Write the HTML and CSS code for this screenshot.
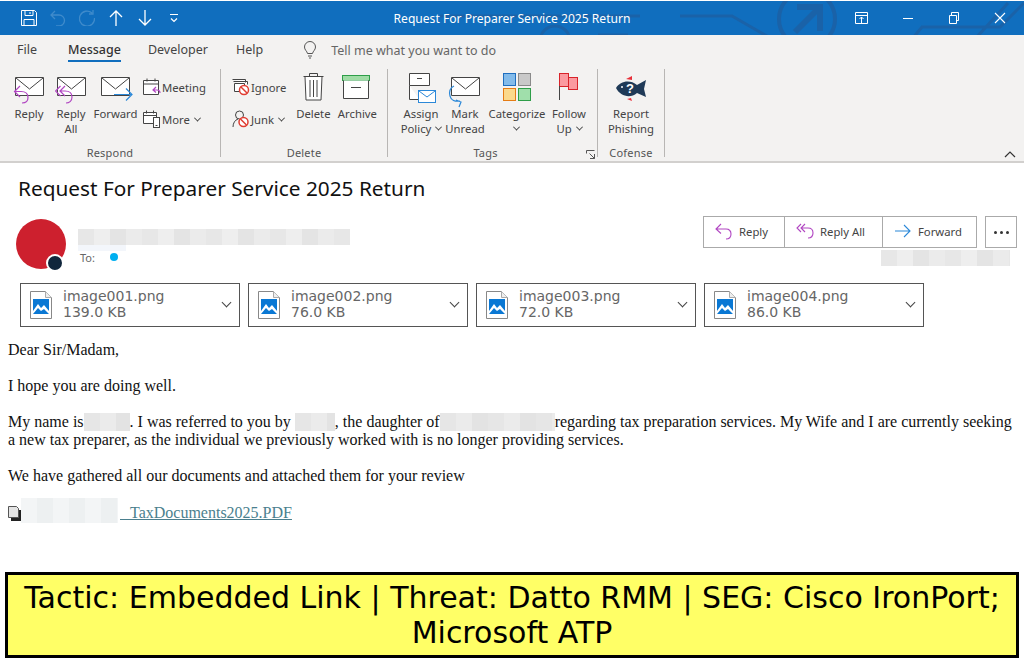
FILE: index.html
```html
<!DOCTYPE html>
<html lang="en">
<head>
<meta charset="utf-8">
<title>Request For Preparer Service 2025 Return</title>
<link rel="stylesheet" href="styles.css">
</head>
<body>
<div class="page">
  <header class="titlebar">
    <svg class="deco" viewBox="0 0 1024 35" fill="none" stroke="#1a62a8" stroke-width="3">
      <path d="M440 15H640M680 15H732L772 38"/>
      <path d="M540 40a15 15 0 0 1 30 0M598 34h30"/>
      <circle cx="807" cy="18" r="28" stroke-width="4"/>
      <path d="M795 31L818 8M797 6H820V30" stroke-width="6"/>
      <path d="M912 38L922 26H1000L1024 2M975 38L1008 2"/>
    </svg>
    <div class="qat">
      <svg class="qi save" viewBox="0 0 16 16"><path d="M.5.5h13l2 2v13H.5zM4 .5v5h8v-5M3 15.500v-6h10v6M9 2v2" fill="none" stroke="#fff"/></svg>
      <svg class="qi undo" viewBox="0 0 16 16"><path d="M5 1L1 5l4 4M1 5h8a5.500 5.500 0 0 1 0 11H6" fill="none" stroke="#3f8bcb" stroke-width="1.300"/></svg>
      <svg class="qi redo" viewBox="0 0 16 16"><path d="M13 3A7.500 7.500 0 1 0 15.500 8M14 0v4h-4" fill="none" stroke="#3f8bcb" stroke-width="1.300"/></svg>
      <svg class="qi up" viewBox="0 0 16 16"><path d="M8 16V1M2 7l6-6 6 6" fill="none" stroke="#fff" stroke-width="1.300"/></svg>
      <svg class="qi down" viewBox="0 0 16 16"><path d="M8 0v15M2 9l6 6 6-6" fill="none" stroke="#fff" stroke-width="1.300"/></svg>
      <svg class="qi cust" viewBox="0 0 16 16"><path d="M4 4.500h8M5 8.500l3 3 3-3" fill="none" stroke="#fff" stroke-width="1.200"/></svg>
    </div>
    <div class="wintitle">Request For Preparer Service 2025 Return</div>
    <div class="winctl">
      <svg class="wi" viewBox="0 0 14 12"><path d="M.5.5h12v11H.5zM.5 3.500h12M6.500 11V5M4.500 7l2-2 2 2" fill="none" stroke="#fff"/></svg>
      <svg class="wi" viewBox="0 0 14 12"><path d="M2 6.500h10" fill="none" stroke="#fff"/></svg>
      <svg class="wi" viewBox="0 0 14 12"><path d="M2.500 3.500h7v8h-7zM4.500 3.500v-3h7v8h-2" fill="none" stroke="#fff"/></svg>
      <svg class="wi" viewBox="0 0 14 12"><path d="M2 1l10 10M12 1L2 11" fill="none" stroke="#fff" stroke-width="1.100"/></svg>
    </div>
  </header>

  <nav class="tabs">
    <span class="tab tab-file">File</span>
    <span class="tab tab-msg active">Message</span>
    <span class="tab tab-dev">Developer</span>
    <span class="tab tab-help">Help</span>
    <svg class="bulb" viewBox="0 0 14 18"><path d="M4.500 12.500C4 10 1.500 9 1.500 6a5.500 5.500 0 0 1 11 0c0 3-2.500 4-3 6.500zM5 15h4M6 17h2" fill="none" stroke="#555"/></svg>
    <span class="tell">Tell me what you want to do</span>
  </nav>

  <section class="ribbon">
    <div class="group g-respond">
      <div class="cmds">
        <div class="bigbtn w-reply">
          <svg class="bigicon" viewBox="0 0 32 32"><use href="#env"/><use href="#arrow-reply"/></svg>
          <span class="lbl">Reply</span>
        </div>
        <div class="bigbtn w-replyall">
          <svg class="bigicon" viewBox="0 0 32 32"><use href="#env"/><use href="#arrow-replyall"/></svg>
          <span class="lbl">Reply<br>All</span>
        </div>
        <div class="bigbtn w-forward">
          <svg class="bigicon" viewBox="0 0 32 32"><path d="M1.500 2.500h28v18h-28z" fill="#fff" stroke="#444"/><path d="M2 3l13.500 11L29 3" fill="none" stroke="#444"/><path d="M14 19.500h18M26 13.500l6 6-6 6" fill="none" stroke="#2b88d8" stroke-width="1.200"/></svg>
          <span class="lbl">Forward</span>
        </div>
        <div class="smallcol col-meet">
          <div class="smallbtn">
            <svg class="smicon" viewBox="0 0 18 18"><path d="M.5 2.500h15v14H.5zM.5 6h15M4 .5v3M12 .5v3" fill="#fff" stroke="#444"/><path d="M13 9L10 12l3 2.500M10 12h4c2 0 3 1 3 3" fill="none" stroke="#b146c2" stroke-width="1.200"/></svg>
            <span>Meeting</span>
          </div>
          <div class="smallbtn">
            <svg class="smicon" viewBox="0 0 18 18"><path d="M.5 2.500h13v11H.5zM.5 5.500h13M3.500.5v3M10.500.5v3" fill="#fff" stroke="#444"/><rect x="10.500" y="7.500" width="6" height="10" fill="#fff" stroke="#444"/><path d="M12.500 15.500h2" stroke="#444"/></svg>
            <span>More<i class="chev"></i></span>
          </div>
        </div>
      </div>
      <div class="glabel">Respond</div>
    </div>

    <div class="group g-delete">
      <div class="cmds">
        <div class="smallcol col-ignore">
          <div class="smallbtn">
            <svg class="smicon" viewBox="0 0 18 18"><path d="M.5 1.500h13v3M1.500 3.500h14v3M2.500 5.500h10v8h-10z" fill="#fff" stroke="#444"/><circle cx="12" cy="12" r="4.500" fill="#fff" stroke="#e03c31" stroke-width="1.500"/><path d="M9 9l6 6" stroke="#e03c31" stroke-width="1.500"/></svg>
            <span>Ignore</span>
          </div>
          <div class="smallbtn">
            <svg class="smicon" viewBox="0 0 18 18"><circle cx="7.500" cy="5" r="4" fill="none" stroke="#444"/><path d="M1 17c0-4 2-7 5-8" fill="none" stroke="#444"/><circle cx="11.500" cy="12" r="4.500" fill="#fff" stroke="#e03c31" stroke-width="1.500"/><path d="M8.500 9l6 6" stroke="#e03c31" stroke-width="1.500"/></svg>
            <span>Junk<i class="chev"></i></span>
          </div>
        </div>
        <div class="bigbtn w-delete">
          <svg class="bigicon" viewBox="0 0 32 32"><path d="M8 1.500h17l-1 23.500H9z" fill="#fff" stroke="#444"/><path d="M6.500 1.500h20M12.500 1.500v-3h8v3M13 5v17M16.500 5v17M20 5v17" fill="none" stroke="#444"/></svg>
          <span class="lbl">Delete</span>
        </div>
        <div class="bigbtn w-archive">
          <svg class="bigicon" viewBox="0 0 32 32"><rect x="1.500" y=".5" width="27" height="5" fill="#9fdca5" stroke="#2e9e49"/><path d="M2.500 5.500v18h25v-18" fill="#fff" stroke="#444"/><path d="M10 12.500h10" stroke="#444"/></svg>
          <span class="lbl">Archive</span>
        </div>
      </div>
      <div class="glabel">Delete</div>
    </div>

    <div class="group g-tags">
      <div class="cmds">
        <div class="bigbtn w-assign">
          <svg class="bigicon" viewBox="0 0 32 32"><path d="M4.500 -1.500h20v12h-20zM4.500 10.500v14h10" fill="#fff" stroke="#444"/><path d="M12 3.500h5" stroke="#444"/><rect x="13.500" y="15.500" width="17" height="12" fill="#fff" stroke="#2b88d8"/><path d="M14 16l8 6 8-6" fill="none" stroke="#2b88d8"/></svg>
          <span class="lbl">Assign<br>Policy<i class="chev"></i></span>
        </div>
        <div class="bigbtn w-mark">
          <svg class="bigicon" viewBox="0 0 32 32"><use href="#env"/><path d="M5 11C1 13 0 17 1 21c1 4 5 6 10 5M7 25l5 2-2 5" fill="none" stroke="#2b88d8" stroke-width="1.200"/></svg>
          <span class="lbl">Mark<br>Unread</span>
        </div>
        <div class="bigbtn w-cat">
          <svg class="bigicon" viewBox="0 0 32 32"><rect x="2.500" y="-1.500" width="12" height="12" fill="#83bbea" stroke="#1f6fc0"/><rect x="17.500" y="-1.500" width="12" height="12" fill="#c9c9c9" stroke="#8a8a8a"/><rect x="2.500" y="13.500" width="12" height="12" fill="#fbd98c" stroke="#e57c14"/><rect x="17.500" y="13.500" width="12" height="12" fill="#a0dfab" stroke="#2e9e49"/></svg>
          <span class="lbl">Categorize<br><i class="chev solo"></i></span>
        </div>
        <div class="bigbtn w-follow">
          <svg class="bigicon" viewBox="0 0 32 32"><rect x="6.500" y="-1.500" width="9" height="13" fill="#fb9aa0" stroke="#d8232a"/><rect x="15.500" y="2.500" width="9" height="12" fill="#fb9aa0" stroke="#d8232a"/><path d="M6.500 11v14" stroke="#444"/></svg>
          <span class="lbl">Follow<br>Up<i class="chev"></i></span>
        </div>
      </div>
      <div class="glabel">Tags</div>
      <svg class="launcher" viewBox="0 0 9 9"><path d="M.5 3.500v-3h8M8.500 8.500l-5-5M4 8.500h4.500V4" fill="none" stroke="#555"/></svg>
    </div>

    <div class="group g-cofense">
      <div class="cmds">
        <div class="bigbtn w-report">
          <svg class="bigicon" viewBox="0 0 32 32"><path d="M11 4l6-3v4zM12 24l5 2-1-3z" fill="#e8303a"/><path d="M1 13c4-7 14-9 21-3l9-5-2 9 2 8-9-4c-7 6-17 3-21-5z" fill="#1f3a57"/><circle cx="7" cy="12" r="1" fill="#fff"/><text x="11" y="18" class="fishq">?</text></svg>
          <span class="lbl">Report<br>Phishing</span>
        </div>
      </div>
      <div class="glabel">Cofense</div>
    </div>
    <svg class="collapse" viewBox="0 0 12 7"><path d="M1 6l5-5 5 5" fill="none" stroke="#333" stroke-width="1.200"/></svg>
  </section>

  <main class="msg">
    <h1 class="subject">Request For Preparer Service 2025 Return</h1>
    <div class="head">
      <div class="avatar"><span class="presence"></span></div>
      <div class="sender">
        <div class="blur blur-name"></div>
        <div class="blur-sub"></div>
        <div class="toline"><span>To:</span><i class="dot"></i></div>
      </div>
      <div class="actions">
        <div class="actrow">
          <div class="btngroup">
            <div class="act a-reply"><svg class="acticon" viewBox="0 0 18 18"><path d="M6 2L1 7l5 4.500M1 7h10c3 0 5 2 5 5s-2 5-5 5" fill="none" stroke="#b146c2" stroke-width="1.100"/></svg>Reply</div>
            <div class="act a-all"><svg class="acticon" viewBox="0 0 18 18"><path d="M5 2L1 6l4 4M9 2L5 6l4 4M5 6h7c3 0 5 2 5 5s-2 5-5 5" fill="none" stroke="#b146c2" stroke-width="1.100"/></svg>Reply All</div>
            <div class="act a-fwd"><svg class="acticon" viewBox="0 0 18 18"><path d="M1 9h15M10 3l6 6-6 6" fill="none" stroke="#2b88d8" stroke-width="1.100"/></svg>Forward</div>
          </div>
          <div class="dots"><i></i><i></i><i></i></div>
        </div>
        <div class="blur blur-date"></div>
      </div>
    </div>
    <div class="attachments">
      <div class="att"><svg class="fileicon" viewBox="0 0 22 28"><use href="#img-file"/></svg><div class="attmeta"><span>image001.png</span><span>139.0 KB</span></div><i class="attchev"></i></div>
      <div class="att"><svg class="fileicon" viewBox="0 0 22 28"><use href="#img-file"/></svg><div class="attmeta"><span>image002.png</span><span>76.0 KB</span></div><i class="attchev"></i></div>
      <div class="att"><svg class="fileicon" viewBox="0 0 22 28"><use href="#img-file"/></svg><div class="attmeta"><span>image003.png</span><span>72.0 KB</span></div><i class="attchev"></i></div>
      <div class="att"><svg class="fileicon" viewBox="0 0 22 28"><use href="#img-file"/></svg><div class="attmeta"><span>image004.png</span><span>86.0 KB</span></div><i class="attchev"></i></div>
    </div>
    <div class="body">
      <p>Dear Sir/Madam,</p>
      <p>I hope you are doing well.</p>
      <p>My name is<span class="blur r1"></span>. I was referred to you by <span class="blur r2"></span>, the daughter of<span class="blur r3"></span>regarding tax preparation services. My Wife and I are currently seeking a new tax preparer, as the individual we previously worked with is no longer providing services.</p>
      <p>We have gathered all our documents and attached them for your review</p>
      <p class="linkline"><svg class="docicon" viewBox="0 0 13 15"><path d="M3 4h10v11H3z" fill="#222"/><path d="M.5.500h8l2 2v9h-10z" fill="#e4e4e4" stroke="#555"/></svg><span class="blur r4"></span><a class="link" href="#"><span class="gap">&nbsp;&nbsp;&nbsp;</span>TaxDocuments2025.PDF</a></p>
    </div>
  </main>

  <footer class="banner">Tactic: Embedded Link | Threat: Datto RMM | SEG: Cisco IronPort; Microsoft ATP</footer>
</div>

<svg class="defs" aria-hidden="true">
  <symbol id="env" viewBox="0 0 32 32">
    <path d="M2.500 2.500h28v18h-28z" fill="#fff" stroke="#444"/><path d="M3 3l13.500 11L30 3" fill="none" stroke="#444"/>
  </symbol>
  <symbol id="arrow-reply" viewBox="0 0 32 32">
    <path d="M7 11L1.500 16.500 7 22M1.500 16.500H8c4 0 7 2 7 6s-3 5.500-6 5.500" fill="none" stroke="#b146c2" stroke-width="1.200"/>
  </symbol>
  <symbol id="arrow-replyall" viewBox="0 0 32 32">
    <path d="M5.500 11L.5 16l5 5M10 11l-5 5 5 5M5 16h5c4 0 7 2 7 6s-3 6-6 6" fill="none" stroke="#b146c2" stroke-width="1.200"/>
  </symbol>
  <symbol id="img-file" viewBox="0 0 22 28">
    <path d="M.5.5h15l6 6v21H.5z" fill="#fff" stroke="#888"/><path d="M15.500.5v6h6" fill="#eee" stroke="#aaa"/>
    <rect x="3" y="8" width="16" height="15" fill="#0a78d4"/>
    <path d="M3 20l5-7 3 4 3-3 5 6v3H3z" fill="#fff"/><path d="M3 23l5-6 3 3 3-2 5 5z" fill="#0a78d4"/>
  </symbol>
</svg>
</body>
</html>
```
FILE: styles.css
```css
* { box-sizing: border-box; }
html, body { margin: 0; padding: 0; height: 100%; background: #fff; overflow: hidden; }
.defs { width: 0; height: 0; display: block; overflow: hidden; }
.page { width: 1024px; height: 663px; display: flex; flex-direction: column; position: relative; font-family: "Noto Sans", sans-serif; }

.titlebar { height: 35px; background: #106ebe; border-top: 1px solid #fff; display: grid; grid-template-columns: 1fr auto 1fr; align-items: center; position: relative; color: #fff; }
.deco { position: absolute; left: 0; top: 0; width: 1024px; height: 35px; }
.qat { display: flex; align-items: center; padding-left: 21px; position: relative; }
.qi { width: 16px; height: 16px; display: block; margin-right: 13px; flex: none; }
.wintitle { font-size: 12.1px; position: relative; }
.winctl { display: flex; justify-content: flex-end; align-items: center; position: relative; padding-right: 17px; gap: 32px; }
.wi { width: 14px; height: 12px; display: block; }

.tabs { height: 33px; background: #f3f2f1; display: flex; align-items: center; font-size: 12.5px; color: #444; position: relative; padding: 0 0 3px 17px; }
.tab { display: block; line-height: 24px; margin-right: 27px; }
.tab.active { color: #333; font-weight: 500; position: relative; }
.tab.active::after { content: ""; position: absolute; left: 0; right: 0; bottom: 0; height: 2px; background: #106ebe; }
.tab-file { margin-right: 31px; }
.tab-dev { margin-right: 28px; }
.tab-help { margin-right: 40px; }
.bulb { width: 14px; height: 18px; display: block; margin-right: 14px; }
.tell { color: #666; }

.ribbon { height: 95px; background: #f3f2f1; border-bottom: 2px solid #d2d0ce; display: flex; position: relative; font-size: 11.3px; color: #444; }
.group { height: 88px; margin-top: 1px; border-right: 1px solid #b8b6b4; display: flex; flex-direction: column; position: relative; }
.g-respond { width: 221px; }
.g-delete { width: 167px; }
.g-tags { width: 210px; }
.g-cofense { width: 67px; }
.cmds { display: flex; flex: none; height: 77px; padding-top: 6px; }
.g-respond .cmds { padding-left: 8px; }
.g-delete .cmds { padding-left: 7px; }
.g-tags .cmds { padding-left: 8px; }
.g-cofense .cmds { padding-left: 4px; }
.g-tags .glabel { padding-right: 14px; }
.glabel { flex: none; text-align: center; font-size: 11px; line-height: 14px; letter-spacing: .2px; color: #555; }
.bigbtn { display: flex; flex-direction: column; align-items: center; flex: none; }
.bigicon { width: 32px; height: 32px; display: block; overflow: visible; }
.lbl { line-height: 15px; margin-top: -1px; text-align: center; white-space: nowrap; display: block; }
.w-reply { width: 42px; }
.w-replyall { width: 42px; }
.w-forward { width: 47px; }
.w-delete { width: 44px; margin-left: 5px; }
.w-archive { width: 44px; }
.w-assign { width: 50px; }
.w-mark { width: 38px; }
.w-cat { width: 66px; }
.w-follow { width: 38px; }
.w-report { width: 58px; }
.smallcol { display: flex; flex-direction: column; gap: 14px; padding-top: 3px; flex: none; }
.col-meet { margin-left: 4px; }
.col-ignore { margin-left: 4px; }
.smallbtn { display: flex; align-items: center; height: 18px; white-space: nowrap; gap: 1px; }
.smicon { width: 18px; height: 18px; display: block; overflow: visible; flex: none; }
.chev { display: inline-block; width: 5px; height: 5px; border-right: 1px solid #444; border-bottom: 1px solid #444; transform: rotate(45deg) translate(-1px, -1px); margin-left: 5px; vertical-align: 2px; }
.chev.solo { margin-left: 0; }
.fishq { font: 700 13px "Liberation Sans", sans-serif; fill: #fff; }
.launcher { position: absolute; right: 2px; bottom: -2px; width: 9px; height: 9px; }
.collapse { position: absolute; right: 8px; bottom: 3px; width: 12px; height: 7px; }

.msg { flex: 1; min-height: 0; }
.subject { margin: 13px 0 0 18px; font-size: 20.8px; font-weight: 400; line-height: 24px; color: #111; }
.head { display: flex; margin-top: 19px; height: 54px; padding-left: 16px; position: relative; }
.avatar { width: 50px; height: 50px; border-radius: 50%; background: #cd202e; position: relative; flex: none; }
.presence { position: absolute; left: 30px; top: 35px; width: 18px; height: 18px; border-radius: 50%; background: #10263c; border: 2px solid #fff; }
.sender { margin-left: 12px; width: 272px; padding-top: 10px; flex: none; position: relative; }
.blur-name { height: 16px; }
.blur-sub { position: absolute; left: 0; top: 26px; width: 48px; height: 6px; background: #f3f6fb; }
.blur { background-color: #ececec; background-image: repeating-linear-gradient(90deg, #e7e7e7 0 16px, #eee 16px 32px, #e4e4e4 32px 48px, #ebebeb 48px 64px); }
.toline { display: flex; align-items: center; height: 16px; margin-top: 4px; padding-left: 2px; font-size: 11px; color: #666; }
.dot { width: 8px; height: 8px; border-radius: 50%; background: #00aff0; margin-left: 15px; }
.actions { margin-left: auto; display: flex; flex-direction: column; align-items: flex-end; margin-top: -3px; padding-right: 7px; }
.actrow { display: flex; gap: 8px; }
.btngroup { display: flex; height: 32px; border: 1px solid #aaa; background: #fff; }
.act { display: flex; align-items: center; font-size: 11.3px; color: #444; border-right: 1px solid #aaa; padding: 0 0 2px 11px; gap: 6px; }
.act:last-child { border-right: 0; }
.a-reply { width: 81px; }
.a-all { width: 98px; }
.a-fwd { width: 93px; }
.acticon { width: 18px; height: 18px; display: block; }
.dots { width: 32px; height: 32px; border: 1px solid #aaa; display: flex; align-items: center; justify-content: center; gap: 3px; }
.dots i { width: 3px; height: 3px; border-radius: 50%; background: #333; }
.blur-date { width: 129px; height: 16px; margin-top: 2px; margin-right: 7px; }

.attachments { display: flex; gap: 8px; padding-left: 20px; margin-top: 10px; }
.att { width: 220px; height: 44px; border: 1px solid #555; display: flex; align-items: center; padding-left: 9px; position: relative; }
.fileicon { width: 22px; height: 28px; display: block; flex: none; }
.attmeta { margin-left: 11px; padding-bottom: 2px; display: flex; flex-direction: column; font: 14px/16px "DejaVu Sans", sans-serif; color: #666; }
.attchev { position: absolute; right: 9px; top: 15px; width: 7px; height: 7px; border-right: 1.300px solid #444; border-bottom: 1.300px solid #444; transform: rotate(45deg); }

.body { padding: 14px 8px 0; font: 16px/18px "Liberation Serif", serif; color: #111; }
.body p { margin: 0 0 18px; }
.body .blur { display: inline-block; height: 18px; vertical-align: top; background-image: repeating-linear-gradient(90deg, #e6e6e6 0 16px, #ebebeb 16px 32px, #e3e3e3 32px 48px); }
.r1 { width: 46px; }
.r2 { width: 40px; }
.r3 { width: 115px; }
.body .r4 { width: 97px; height: 25px; margin: -6px 2px 0 0; background-image: repeating-linear-gradient(90deg, #f3f5f6 0 16px, #edf0f1 16px 32px); }
.linkline { white-space: nowrap; padding-top: 1px; }
.docicon { width: 13px; height: 15px; display: inline-block; vertical-align: -3px; }
.link { color: #4a7f8e; text-decoration: underline; }
.gap { font-size: 13.3px; }

.banner { margin: 0 5px 5px; height: 86px; border: 3px solid #000; background: #ffff66; color: #000; font: 30px/35px "DejaVu Sans", sans-serif; text-align: center; padding-top: 5px; flex: none; }
```
